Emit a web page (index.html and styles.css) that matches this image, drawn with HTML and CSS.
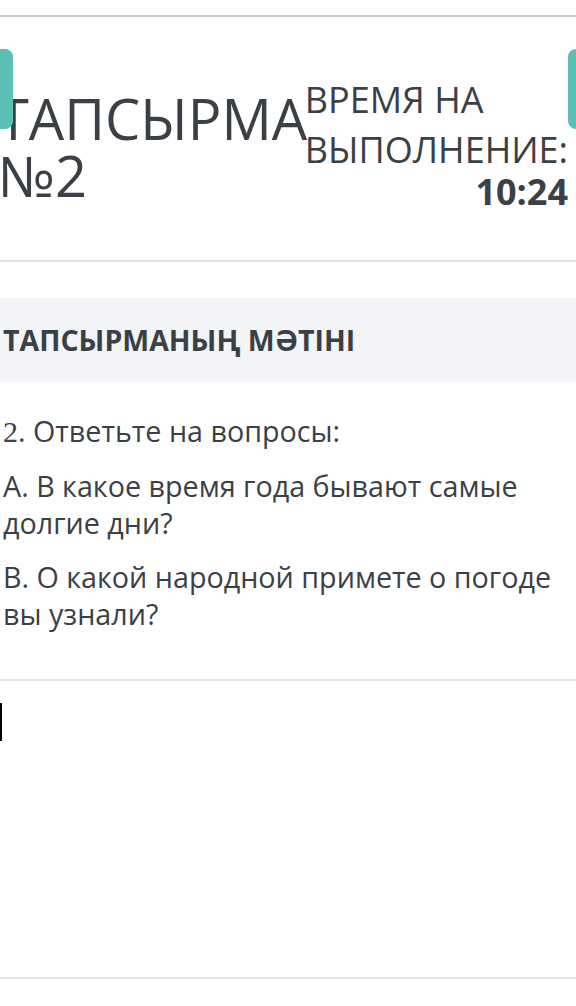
FILE: index.html
```html
<!DOCTYPE html>
<html lang="ru">
<head>
  <meta charset="UTF-8" />
  <title>Тапсырма №2</title>
  <link rel="stylesheet" href="styles.css">
</head>
<body>
  <div class="topbar"></div>

  <header class="task-head">
    <button class="nav-btn nav-prev" aria-label="Алдыңғы"></button>
    <h1 class="task-title">ТАПСЫРМА №2</h1>
    <div class="timer">
      <div class="timer-label">ВРЕМЯ НА ВЫПОЛНЕНИЕ:</div>
      <div class="timer-value">10:24</div>
    </div>
    <button class="nav-btn nav-next" aria-label="Келесі"></button>
  </header>

  <section class="task-text">
    <h2 class="section-title">ТАПСЫРМАНЫҢ МӘТІНІ</h2>
    <div class="question">
      <p><span class="num">2</span>. Ответьте на вопросы:</p>
      <p>А. В какое время года бывают самые долгие дни?</p>
      <p>В. О какой народной примете о погоде вы узнали?</p>
    </div>
  </section>

  <div class="answer">
    <span class="caret"></span>
  </div>
</body>
</html>
```

FILE: styles.css
```css
body {
  margin: 0;
  font-family: 'Open Sans', sans-serif;
  color: #3b3f46;
  background: #fff;
  overflow-x: hidden;
}
.topbar {
  height: 15px;
  border-bottom: 2px solid #cbcbcb;
  box-shadow: 0 1px 2px rgba(0, 0, 0, 0.04);
}
.task-head {
  position: relative;
  display: flex;
  align-items: center;
  padding: 58px 8px 51px 0;
  border-bottom: 2px solid #e3e3e3;
}
.task-title {
  flex: 1;
  min-width: 0;
  margin: 10px 0 0 -2px;
  font-size: 56px;
  font-weight: 400;
  line-height: 57px;
}
.timer {
  flex: 0 0 260px;
  font-size: 36px;
}
.timer-label {
  line-height: 50px;
}
.timer-value {
  text-align: right;
  font-weight: 700;
  line-height: 34px;
}
.nav-btn {
  position: absolute;
  top: 32px;
  width: 44px;
  height: 80px;
  border: none;
  border-radius: 8px;
  background: #5cbfb5;
}
.nav-prev {
  left: -31px;
}
.nav-next {
  right: -36px;
}
.task-text {
  margin-top: 36px;
  padding-bottom: 47px;
  border-bottom: 2px solid #e2e2e2;
}
.section-title {
  margin: 0;
  height: 84px;
  padding-left: 3px;
  display: flex;
  align-items: center;
  background: #f3f4f8;
  font-size: 28.5px;
  font-weight: 700;
}
.question {
  padding: 30px 18px 0 3px;
  font-size: 28.7px;
  line-height: 37px;
}
.question p {
  margin: 0 0 17px;
}
.question p:last-child {
  margin-bottom: 0;
}
.num {
  font-family: 'Liberation Serif', serif;
  font-size: 30px;
}
.answer {
  height: 274px;
  padding-top: 22px;
  border-bottom: 2px solid #e2e2e2;
}
.caret {
  display: block;
  width: 2px;
  height: 38px;
  background: #000;
}
```
